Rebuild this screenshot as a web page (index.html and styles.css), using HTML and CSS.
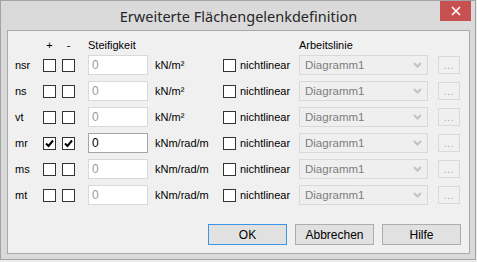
FILE: index.html
```html
<!DOCTYPE html>
<html lang="de">
<head>
    <meta charset="UTF-8">
    <title>Erweiterte Flächengelenkdefinition</title>
    <link rel="stylesheet" href="styles.css">
</head>
<body>
    <div class="window">
        <div class="titlebar">Erweiterte Flächengelenkdefinition</div>
        <div class="close">
            <svg width="10" height="10" viewBox="0 0 10 10"><path d="M1 1L9 9M9 1L1 9" stroke="#fff" stroke-width="1.6"/></svg>
        </div>

        <div class="client">
            <div class="row head">
                <span></span>
                <span class="sign">+</span>
                <span class="sign">-</span>
                <span>Steifigkeit</span>
                <span></span>
                <span></span>
                <span></span>
                <span>Arbeitslinie</span>
                <span></span>
            </div>

            <div class="row">
                <span>nsr</span>
                <span class="cb"></span>
                <span class="cb"></span>
                <span class="field off">0</span>
                <span>kN/m²</span>
                <span class="cb"></span>
                <span>nichtlinear</span>
                <span class="combo">Diagramm1<svg class="arrow" width="9" height="6" viewBox="0 0 9 6"><path d="M1 1L4.5 4.5L8 1" fill="none" stroke="#c2c2c2" stroke-width="2"/></svg></span>
                <span class="dots">...</span>
            </div>

            <div class="row">
                <span>ns</span>
                <span class="cb"></span>
                <span class="cb"></span>
                <span class="field off">0</span>
                <span>kN/m²</span>
                <span class="cb"></span>
                <span>nichtlinear</span>
                <span class="combo">Diagramm1<svg class="arrow" width="9" height="6" viewBox="0 0 9 6"><path d="M1 1L4.5 4.5L8 1" fill="none" stroke="#c2c2c2" stroke-width="2"/></svg></span>
                <span class="dots">...</span>
            </div>

            <div class="row">
                <span>vt</span>
                <span class="cb"></span>
                <span class="cb"></span>
                <span class="field off">0</span>
                <span>kN/m²</span>
                <span class="cb"></span>
                <span>nichtlinear</span>
                <span class="combo">Diagramm1<svg class="arrow" width="9" height="6" viewBox="0 0 9 6"><path d="M1 1L4.5 4.5L8 1" fill="none" stroke="#c2c2c2" stroke-width="2"/></svg></span>
                <span class="dots">...</span>
            </div>

            <div class="row">
                <span>mr</span>
                <span class="cb"><svg width="11" height="11" viewBox="0 0 11 11"><path d="M2 5.5L4.5 8L9 2.5" fill="none" stroke="#000" stroke-width="2"/></svg></span>
                <span class="cb"><svg width="11" height="11" viewBox="0 0 11 11"><path d="M2 5.5L4.5 8L9 2.5" fill="none" stroke="#000" stroke-width="2"/></svg></span>
                <span class="field">0</span>
                <span>kNm/rad/m</span>
                <span class="cb"></span>
                <span>nichtlinear</span>
                <span class="combo">Diagramm1<svg class="arrow" width="9" height="6" viewBox="0 0 9 6"><path d="M1 1L4.5 4.5L8 1" fill="none" stroke="#c2c2c2" stroke-width="2"/></svg></span>
                <span class="dots">...</span>
            </div>

            <div class="row">
                <span>ms</span>
                <span class="cb"></span>
                <span class="cb"></span>
                <span class="field off">0</span>
                <span>kNm/rad/m</span>
                <span class="cb"></span>
                <span>nichtlinear</span>
                <span class="combo">Diagramm1<svg class="arrow" width="9" height="6" viewBox="0 0 9 6"><path d="M1 1L4.5 4.5L8 1" fill="none" stroke="#c2c2c2" stroke-width="2"/></svg></span>
                <span class="dots">...</span>
            </div>

            <div class="row">
                <span>mt</span>
                <span class="cb"></span>
                <span class="cb"></span>
                <span class="field off">0</span>
                <span>kNm/rad/m</span>
                <span class="cb"></span>
                <span>nichtlinear</span>
                <span class="combo">Diagramm1<svg class="arrow" width="9" height="6" viewBox="0 0 9 6"><path d="M1 1L4.5 4.5L8 1" fill="none" stroke="#c2c2c2" stroke-width="2"/></svg></span>
                <span class="dots">...</span>
            </div>

            <div class="actions">
                <button class="btn default">OK</button>
                <button class="btn">Abbrechen</button>
                <button class="btn">Hilfe</button>
            </div>
        </div>
    </div>
</body>
</html>
```

FILE: styles.css
```css
* {
    margin: 0;
    padding: 0;
    box-sizing: border-box;
}

body {
    background: #ececec;
    font-family: "Liberation Sans", Arial, sans-serif;
    font-size: 11px;
    color: #000;
}

.window {
    position: relative;
    width: 476px;
    height: 260px;
    border: 1px solid #a3a3a3;
    background: #dadada;
    display: flex;
    flex-direction: column;
    padding: 0 5px 5px 6px;
}

.titlebar {
    height: 29px;
    display: flex;
    align-items: center;
    justify-content: center;
    font-family: "Noto Sans", "Open Sans", sans-serif;
    font-size: 14.5px;
    color: #262626;
}

.close {
    position: absolute;
    top: 0;
    right: 4px;
    width: 31px;
    height: 20px;
    background: #c75050;
    display: flex;
    align-items: center;
    justify-content: center;
}

.client {
    flex: 1;
    background: #f0f0f0;
    border: 1px solid #a9a9a9;
    padding: 8px 8px 0 7px;
}

.row {
    display: grid;
    grid-template-columns: 28px 19px 26px 67px 68px 17px 59px 139px 22px;
    height: 26px;
    align-items: center;
    white-space: nowrap;
}

.row.head {
    height: 13px;
    align-items: end;
    line-height: 13px;
}

.sign {
    width: 13px;
    text-align: center;
}

.cb {
    width: 13px;
    height: 13px;
    border: 1px solid #333;
    background: #fff;
    display: flex;
    align-items: center;
    justify-content: center;
}

.field {
    width: 60px;
    height: 20px;
    border: 1px solid #a5a5a5;
    background: #fff;
    padding: 0 3px;
    line-height: 18px;
    font-size: 12px;
}

.field.off {
    border-color: #d9d9d9;
    color: #9a9a9a;
}

.combo {
    width: 129px;
    height: 20px;
    border: 1px solid #d9d9d9;
    background: #efefef;
    color: #7d7d7d;
    font-size: 11.5px;
    padding-left: 5px;
    padding-right: 5px;
    display: flex;
    align-items: center;
    justify-content: space-between;
}

.dots {
    width: 22px;
    height: 18px;
    border: 1px solid #d9d9d9;
    background: #f0f0f0;
    color: #a8a8a8;
    text-align: center;
    line-height: 18px;
    font-size: 10px;
    letter-spacing: 0.5px;
}

.actions {
    display: flex;
    justify-content: flex-end;
    gap: 8px;
    margin-top: 16px;
}

.btn {
    width: 79px;
    height: 21px;
    border: 1px solid #adadad;
    background: #e1e1e1;
    font-family: "Liberation Sans", Arial, sans-serif;
    font-size: 12px;
    color: #000;
}

.btn.default {
    border-color: #3c94e8;
}
```
